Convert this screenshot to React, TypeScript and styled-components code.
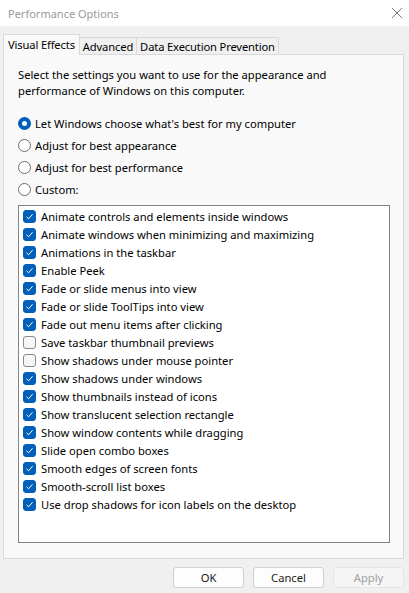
import React from "react";
import styled, { createGlobalStyle } from "styled-components";

const Global = createGlobalStyle`
  html, body { margin: 0; padding: 0; }
  body {
    width: 409px;
    height: 593px;
    overflow: hidden;
    background: #f0f0f0;
    font-family: "Noto Sans", "Open Sans", sans-serif;
    font-size: 11.2px;
    color: #000;
  }
`;

const Window = styled.div`
  width: 409px;
  height: 593px;
  display: flex;
  flex-direction: column;
  background: #f0f0f0;
`;

const TitleBar = styled.div`
  height: 26px;
  background: #fff;
  display: flex;
  align-items: center;
  justify-content: space-between;
  padding: 0 5px 0 8px;
`;

const Title = styled.span`
  color: #9a9a9a;
  font-size: 11px;
`;

const CloseBtn = styled.div`
  width: 14px;
  height: 14px;
  display: flex;
  align-items: center;
  justify-content: center;
`;

const Body = styled.div`
  flex: 1;
  padding: 8px 5px 0 3px;
  display: flex;
  flex-direction: column;
`;

const Tabs = styled.div`
  display: flex;
  align-items: flex-end;
  height: 21px;
  position: relative;
  z-index: 1;
`;

const Tab = styled.div<{ $active?: boolean }>`
  height: ${(p) => (p.$active ? "21px" : "18px")};
  padding: 0 ${(p) => (p.$active ? "4px" : "3px")};
  display: flex;
  align-items: center;
  background: ${(p) => (p.$active ? "#f9f9f9" : "#f0f0f0")};
  border: 1px solid #d9d9d9;
  border-bottom: ${(p) => (p.$active ? "1px solid #f9f9f9" : "1px solid #d9d9d9")};
  margin-left: ${(p) => (p.$active ? "0" : "-1px")};
  box-sizing: border-box;
  letter-spacing: -0.15px;
`;

const Panel = styled.div`
  margin-top: -1px;
  height: 505px;
  box-sizing: border-box;
  background: #f9f9f9;
  border: 1px solid #d9d9d9;
  padding: 12px 13px 0 14px;
  display: flex;
  flex-direction: column;
`;

const Intro = styled.p`
  margin: 0;
  line-height: 16px;
`;

const Radios = styled.div`
  display: flex;
  flex-direction: column;
  margin-top: 16px;
  gap: 6px;
`;

const RadioRow = styled.label`
  display: flex;
  align-items: center;
  height: 16px;
  gap: 4px;
`;

const RadioDot = styled.span<{ $on?: boolean }>`
  width: 13px;
  height: 13px;
  box-sizing: border-box;
  border-radius: 50%;
  flex-shrink: 0;
  border: ${(p) => (p.$on ? "4px solid #005fb8" : "1px solid #6e6e6e")};
  background: #fff;
`;

const ListBox = styled.div`
  margin-top: 8px;
  height: 338px;
  box-sizing: border-box;
  background: #fff;
  border: 1px solid #838383;
  padding: 1px 4px;
  display: flex;
  flex-direction: column;
`;

const CheckRow = styled.label`
  display: flex;
  align-items: center;
  height: 18px;
  gap: 5px;
`;

const Box = styled.span<{ $on?: boolean }>`
  width: 13px;
  height: 13px;
  box-sizing: border-box;
  border-radius: 3px;
  flex-shrink: 0;
  display: flex;
  align-items: center;
  justify-content: center;
  background: ${(p) => (p.$on ? "#005fb8" : "#f6f6f6")};
  border: 1px solid ${(p) => (p.$on ? "#005fb8" : "#8a8a8a")};
`;

const Footer = styled.div`
  display: flex;
  justify-content: flex-end;
  gap: 9px;
  padding: 8px 0 0;
`;

const Button = styled.button<{ $disabled?: boolean }>`
  width: 71px;
  height: 21px;
  box-sizing: border-box;
  font-family: inherit;
  font-size: 11.2px;
  border-radius: 3px;
  background: ${(p) => (p.$disabled ? "#f5f5f5" : "#fdfdfd")};
  color: ${(p) => (p.$disabled ? "#a0a0a0" : "#1b1b1b")};
  border: 1px solid ${(p) => (p.$disabled ? "#e5e5e5" : "#d0d0d0")};
  padding: 0;
`;

const options = [
  { label: "Let Windows choose what's best for my computer", on: true },
  { label: "Adjust for best appearance" },
  { label: "Adjust for best performance" },
  { label: "Custom:" },
];

const effects: [string, boolean][] = [
  ["Animate controls and elements inside windows", true],
  ["Animate windows when minimizing and maximizing", true],
  ["Animations in the taskbar", true],
  ["Enable Peek", true],
  ["Fade or slide menus into view", true],
  ["Fade or slide ToolTips into view", true],
  ["Fade out menu items after clicking", true],
  ["Save taskbar thumbnail previews", false],
  ["Show shadows under mouse pointer", false],
  ["Show shadows under windows", true],
  ["Show thumbnails instead of icons", true],
  ["Show translucent selection rectangle", true],
  ["Show window contents while dragging", true],
  ["Slide open combo boxes", true],
  ["Smooth edges of screen fonts", true],
  ["Smooth-scroll list boxes", true],
  ["Use drop shadows for icon labels on the desktop", true],
];

function Tick() {
  return (
    <svg width="9" height="9" viewBox="0 0 9 9">
      <path d="M1.5 4.8 L3.6 6.8 L7.6 2.2" fill="none" stroke="#fff" strokeWidth="1" />
    </svg>
  );
}

export default function App() {
  return (
    <Window>
      <Global />
      <TitleBar>
        <Title>Performance Options</Title>
        <CloseBtn>
          <svg width="12" height="12" viewBox="0 0 12 12">
            <path d="M1 1 L11 11 M11 1 L1 11" stroke="#7a7a7a" strokeWidth="1" />
          </svg>
        </CloseBtn>
      </TitleBar>
      <Body>
        <Tabs>
          <Tab $active>Visual Effects</Tab>
          <Tab>Advanced</Tab>
          <Tab>Data Execution Prevention</Tab>
        </Tabs>
        <Panel>
          <Intro>
            Select the settings you want to use for the appearance and
            <br />
            performance of Windows on this computer.
          </Intro>
          <Radios>
            {options.map((o) => (
              <RadioRow key={o.label}>
                <RadioDot $on={o.on} />
                {o.label}
              </RadioRow>
            ))}
          </Radios>
          <ListBox>
            {effects.map(([label, on]) => (
              <CheckRow key={label}>
                <Box $on={on}>{on && <Tick />}</Box>
                {label}
              </CheckRow>
            ))}
          </ListBox>
        </Panel>
        <Footer>
          <Button>OK</Button>
          <Button>Cancel</Button>
          <Button $disabled>Apply</Button>
        </Footer>
      </Body>
    </Window>
  );
}
